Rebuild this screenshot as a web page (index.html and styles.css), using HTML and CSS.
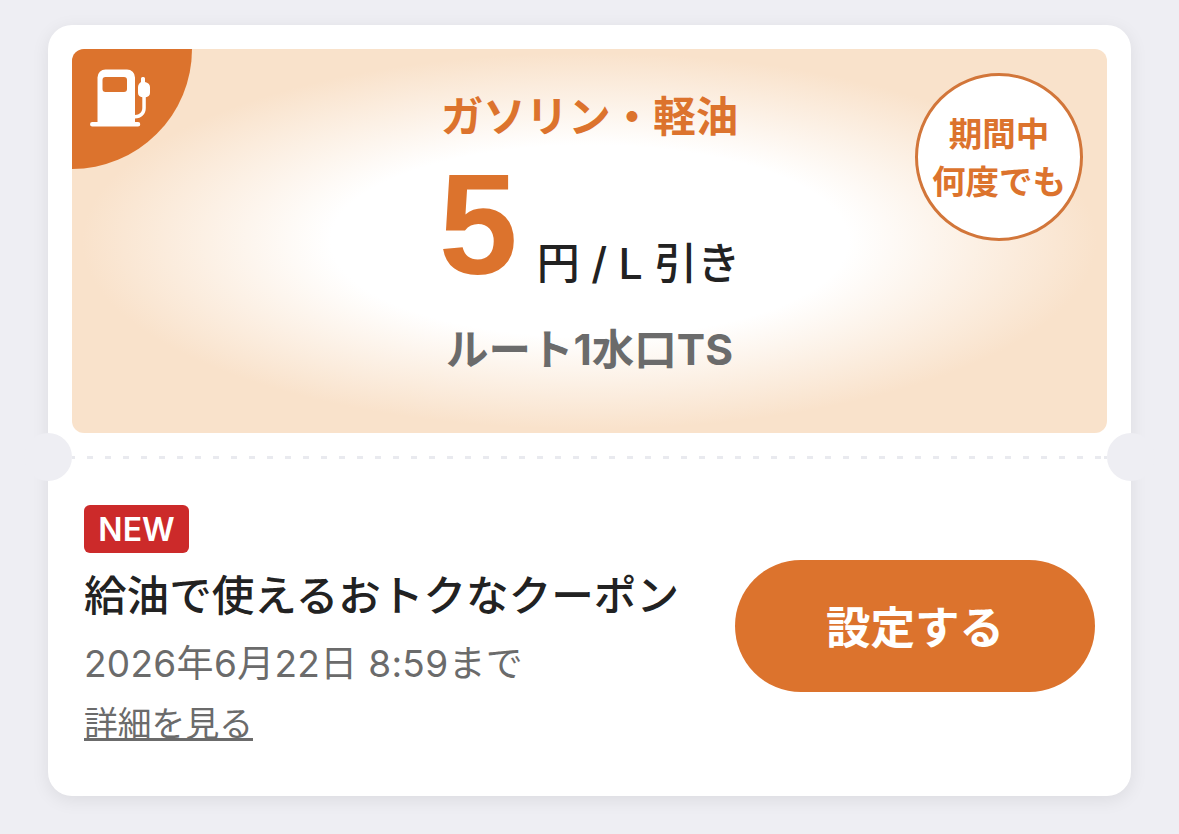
FILE: index.html
```html
<!DOCTYPE html>
<html lang="ja">
<head>
<meta charset="utf-8">
<title>クーポン</title>
<link rel="stylesheet" href="styles.css">
</head>
<body>
<main class="card">
  <section class="hero">
    <div class="corner">
      <svg class="pump" viewBox="0 0 62 58" width="62" height="58" aria-hidden="true">
        <path fill="#fff" fill-rule="evenodd" d="M15.500.5H37a8 8 0 0 1 8 8V53h3a2.250 2.250 0 0 1 0 4.500H2.250a2.250 2.250 0 0 1 0-4.500H7.500V8.500a8 8 0 0 1 8-8zM15.500 8a3 3 0 0 0-3 3v9a3 3 0 0 0 3 3H34a3 3 0 0 0 3-3v-9a3 3 0 0 0-3-3z"/>
        <path fill="#fff" d="M51 9.500A1.500 1.500 0 0 1 52.500 8h1A1.500 1.500 0 0 1 55 9.500V13c3 .5 5 2.500 5 5v6c0 2.500-2 4-4.200 4.300V39c0 6-4.300 10.500-10.800 10.500V46c4.500 0 7.300-3 7.300-7V28.300c-2.300-.3-4.300-1.800-4.300-4.300v-6c0-2.500 2-4.500 3-5z"/>
      </svg>
    </div>
    <p class="kind">ガソリン・軽油</p>
    <p class="discount"><span class="amount">5</span><span class="unit">円 / L 引き</span></p>
    <p class="station">ルート1水口TS</p>
    <div class="stamp">期間中<br>何度でも</div>
  </section>
  <div class="tear"><i class="notch notch-l"></i><i class="notch notch-r"></i></div>
  <section class="info">
    <div class="text">
      <span class="badge">NEW</span>
      <h1 class="title">給油で使えるおトクなクーポン</h1>
      <p class="period">2026年6月22日 8:59まで</p>
      <a class="more" href="#">詳細を見る</a>
    </div>
    <button class="action" type="button">設定する</button>
  </section>
</main>
</body>
</html>
```
FILE: styles.css
```css
* { box-sizing: border-box; }
html, body { margin: 0; height: 100%; }
body {
  background: #eeeef3;
  padding: 25px 48px 0;
  overflow: hidden;
  font-family: Inter, "Noto Sans CJK JP", "Noto Sans", sans-serif;
  color: #222;
}
p, h1 { margin: 0; }
.card {
  height: 771px;
  background: #fff;
  border-radius: 24px;
  padding: 24px 24px 0;
  box-shadow: 0 4px 18px rgba(0, 0, 0, .08);
}
.hero {
  position: relative;
  height: 384px;
  border-radius: 12px;
  overflow: hidden;
  display: flex;
  flex-direction: column;
  align-items: center;
  background: radial-gradient(ellipse 50% 50% at 50% 50%, #fff 50%, #f9e2cb 98%);
}
.corner {
  position: absolute;
  left: 0;
  top: 0;
  width: 120px;
  height: 120px;
  background: #dc732d;
  border-bottom-right-radius: 120px;
}
.pump { position: absolute; left: 18px; top: 20px; }
.kind {
  margin-top: 42px;
  font-size: 42.500px;
  line-height: 52px;
  font-weight: 700;
  color: #dc732d;
}
.discount {
  display: flex;
  align-items: flex-end;
  margin-top: 18px;
  height: 132px;
}
.amount {
  font-family: "Liberation Sans", sans-serif;
  font-size: 142px;
  line-height: 122px;
  font-weight: 700;
  color: #dc732d;
  margin-right: 19px;
  margin-bottom: 7px;
}
.unit { font-size: 43px; line-height: 52px; margin-bottom: 4px; font-weight: 500; color: #222; }
.station {
  margin-top: 31px;
  font-size: 42.500px;
  line-height: 52px;
  font-weight: 700;
  color: #6b6b6b;
}
.stamp {
  position: absolute;
  right: 24px;
  top: 24px;
  width: 168px;
  height: 168px;
  padding-top: 2px;
  border: 3px solid #d2763a;
  border-radius: 50%;
  background: #fff;
  display: flex;
  align-items: center;
  justify-content: center;
  text-align: center;
  font-size: 33.500px;
  line-height: 48px;
  font-weight: 700;
  color: #dc732d;
}
.tear {
  position: relative;
  height: 48px;
  display: flex;
  align-items: center;
}
.tear::before {
  content: "";
  flex: 1;
  height: 3px;
  background: repeating-linear-gradient(90deg, #e9eaef 0 6px, transparent 6px 18px) -3px 0;
}
.notch {
  position: absolute;
  top: 0;
  width: 48px;
  height: 48px;
  border-radius: 50%;
  background: #eeeef3;
}
.notch-l { left: -48px; }
.notch-r { right: -48px; }
.info {
  display: flex;
  align-items: center;
  justify-content: space-between;
  padding: 24px 12px 0;
}
.text { display: flex; flex-direction: column; align-items: flex-start; }
.badge {
  background: #cc2a2a;
  color: #fff;
  border-radius: 6px;
  height: 48px;
  width: 105px;
  text-align: center;
  font-size: 32px;
  line-height: 49px;
  font-weight: 600;
}
.title {
  margin-top: 15px;
  font-size: 42.600px;
  line-height: 56px;
  font-weight: 500;
  color: #222;
}
.period {
  margin-top: 15px;
  font-size: 37px;
  letter-spacing: .3px;
  line-height: 50px;
  color: #6b6b6b;
}
.more {
  margin-top: 12px;
  font-size: 33.800px;
  line-height: 46px;
  color: #6b6b6b;
}
.action {
  width: 360px;
  height: 132px;
  padding-bottom: 4px;
  border: 0;
  border-radius: 66px;
  background: #dc732d;
  color: #fff;
  font-family: inherit;
  font-size: 44.500px;
  font-weight: 700;
}
```
